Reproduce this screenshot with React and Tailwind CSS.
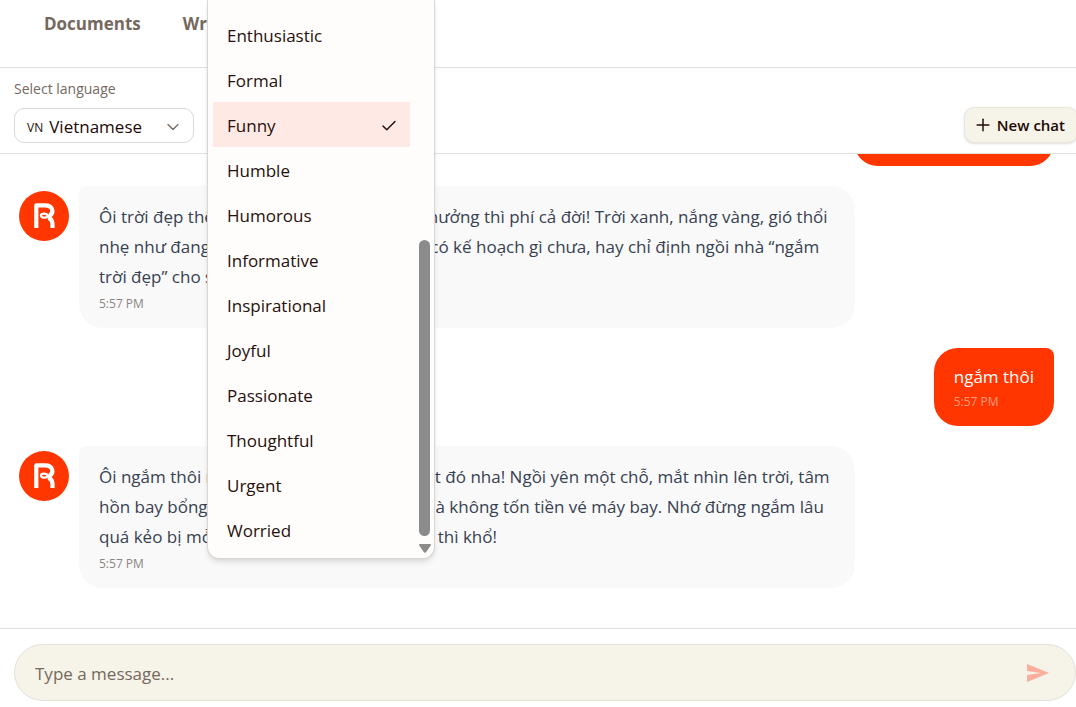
import React, { useState } from 'react';
import { Check, ChevronDown, Plus } from 'lucide-react';

const TONES = [
    'Enthusiastic',
    'Formal',
    'Funny',
    'Humble',
    'Humorous',
    'Informative',
    'Inspirational',
    'Joyful',
    'Passionate',
    'Thoughtful',
    'Urgent',
    'Worried',
];

const MESSAGES = [
    { id: 1, from: 'user', lines: ['hôm nay trời đẹp ha'], time: '5:57 PM' },
    {
        id: 2,
        from: 'bot',
        lines: [
            'Ôi trời đẹp thế kia mà không ra ngoài tận hưởng thì phí cả đời! Trời xanh, nắng vàng, gió thổi',
            'nhẹ như đang ru ngủ luôn vậy đó. Bạn đã có kế hoạch gì chưa, hay chỉ định ngồi nhà “ngắm',
            'trời đẹp” cho sướng mắt thôi?',
        ],
        time: '5:57 PM',
    },
    { id: 3, from: 'user', lines: ['ngắm thôi'], time: '5:57 PM' },
    {
        id: 4,
        from: 'bot',
        lines: [
            'Ôi ngắm thôi mà cũng là cả một nghệ thuật đó nha! Ngồi yên một chỗ, mắt nhìn lên trời, tâm',
            'hồn bay bổng tận đâu đâu, vừa thư giãn mà không tốn tiền vé máy bay. Nhớ đừng ngắm lâu',
            'quá kẻo bị mỏi cổ, rồi ngồi than đau người thì khổ!',
        ],
        time: '5:57 PM',
    },
];

const Avatar = () => (
    <svg viewBox="0 0 50 50" className="mt-[5px] size-[50px] shrink-0" aria-hidden="true">
        <circle cx="25" cy="25" r="25" fill="#ff3600" />
        <g fill="none" stroke="#fff">
            <path d="M17.300 37V14.300H26c8.500 0 9 7.500 4.500 10.700" strokeWidth="4.200" strokeLinejoin="round" />
            <path d="M31.500 24c-2.500 3.200-9.500 3.600-9.500.6 0-2.700 5.500-2.700 7.300.4.700 1.300 1.700 2.300 2.700 3.300" strokeWidth="2.400" />
            <path d="M29.500 26.800c2.800 1.200 4 3 4 6.200v4" strokeWidth="4.200" />
        </g>
    </svg>
);

const Message = ({ message }) => {
    if (message.from === 'user') {
        return (
            <div className="shrink-0 self-end rounded-3xl rounded-tr-lg bg-[#ff3600] px-5 pt-4 pb-3 text-white">
                <p className="text-[17px] leading-[26px]">{message.lines[0]}</p>
                <p className="text-xs leading-6 text-white/50">{message.time}</p>
            </div>
        );
    }

    return (
        <div className="flex shrink-0 items-start gap-2.5">
            <Avatar />
            <div className="w-3/4 rounded-3xl rounded-tl-lg bg-[#f9f9f9] px-5 pt-4 pb-3">
                <p className="text-[17px] leading-[30px] whitespace-nowrap text-[#374151]">
                    {message.lines.map(line => (
                        <span key={line} className="block">{line}</span>
                    ))}
                </p>
                <p className="text-xs leading-6 text-[#8b8583]">{message.time}</p>
            </div>
        </div>
    );
};

const ToneMenu = ({ value, onChange }) => (
    <div className="absolute top-0 left-[207px] flex w-[228px] rounded-b-xl border border-t-0 border-[#d9d6d3] bg-[#fffdfb] shadow-md">
        <div role="listbox" aria-label="Tone" className="flex-1 pt-3 pb-1.5 pl-[5px]">
            {TONES.map(tone => (
                <button
                    key={tone}
                    type="button"
                    role="option"
                    aria-selected={tone === value}
                    onClick={() => onChange(tone)}
                    className={`flex h-[45px] w-full items-center justify-between pt-0.5 pr-3 pl-3.5 text-[17px] text-[#26100c] ${tone === value ? 'bg-[#ffe9e4]' : ''}`}
                >
                    {tone}
                    {tone === value && <Check className="size-[18px]" strokeWidth={2} />}
                </button>
            ))}
        </div>
        <div className="ml-[9px] flex w-[15px] flex-col items-start justify-end gap-2 pb-[5px]" aria-hidden="true">
            <div className="h-[296px] w-[11px] rounded-full bg-[#8b8b8b]" />
            <svg viewBox="0 0 12 9" className="h-[9px] w-3" fill="#8b8b8b">
                <path d="M1 0h10c.9 0 1.300.8.8 1.500L7 8.200c-.5.800-1.500.8-2 0L.2 1.500C-.3.800.1 0 1 0z" />
            </svg>
        </div>
    </div>
);

export default function App() {
    const [tone, setTone] = useState('Funny');
    const [draft, setDraft] = useState('');

    return (
        <div className="relative flex h-screen flex-col overflow-hidden bg-white font-['Open_Sans','Noto_Sans',sans-serif] text-[#1c0a06]">
            <header className="h-[68px] shrink-0 border-b border-[#dfdfdf]">
                <nav className="flex gap-[42px] pt-2.5 pl-11 text-[17px] leading-7 font-bold text-[#75695f]">
                    <a href="#documents">Documents</a>
                    <a href="#writing">Writing</a>
                </nav>
            </header>

            <div className="flex h-[86px] shrink-0 items-end justify-between border-b border-[#e3e0de] pb-2.5 pl-3.5">
                <div>
                    <label htmlFor="language" className="block pb-[7px] text-sm leading-6 text-[#75695f]">
                        Select language
                    </label>
                    <div className="flex h-[35px] w-[180px] items-center gap-1.5 rounded-[10px] border border-[#dcd8d4] pt-0.5 pr-2.5 pl-3">
                        <span className="pt-0.5 text-xs font-medium">VN</span>
                        <select id="language" className="min-w-0 flex-1 appearance-none text-[17px] leading-6 outline-none">
                            <option>Vietnamese</option>
                            <option>English</option>
                        </select>
                        <ChevronDown className="size-5 shrink-0 text-[#75695f]" strokeWidth={1.5} />
                    </div>
                </div>
                <button
                    type="button"
                    className="-mr-0.5 flex h-9 items-center gap-1 rounded-[10px] border border-[#e9e6dc] bg-[#f6f3e8] pr-3 pl-2 text-[15px] font-semibold shadow"
                >
                    <Plus className="size-5" strokeWidth={1.75} />
                    New chat
                </button>
            </div>

            <main className="flex min-h-0 flex-1 flex-col justify-end gap-5 overflow-hidden pr-[22px] pb-10 pl-[19px]">
                {MESSAGES.map(message => (
                    <Message key={message.id} message={message} />
                ))}
            </main>

            <footer className="shrink-0 border-t border-[#dfdfdf] pt-[15px] pb-1.5 pl-3.5">
                <form
                    className="flex h-[57px] items-center rounded-full border border-[#e4e1d8] bg-[#f6f3e8] pr-[26px] pl-5"
                    onSubmit={e => e.preventDefault()}
                >
                    <input
                        type="text"
                        aria-label="Message"
                        placeholder="Type a message..."
                        value={draft}
                        onChange={e => setDraft(e.target.value)}
                        className="flex-1 pt-0.5 text-[17px] outline-none placeholder:text-[#75695f]"
                    />
                    <button type="submit" aria-label="Send">
                        <svg viewBox="0 0 22 18" className="h-[18px] w-[22px]" fill="#faae9b">
                            <path d="M0 0l22 9L0 18v-7l14-2L0 7z" />
                        </svg>
                    </button>
                </form>
            </footer>

            <ToneMenu value={tone} onChange={setTone} />
        </div>
    );
}
